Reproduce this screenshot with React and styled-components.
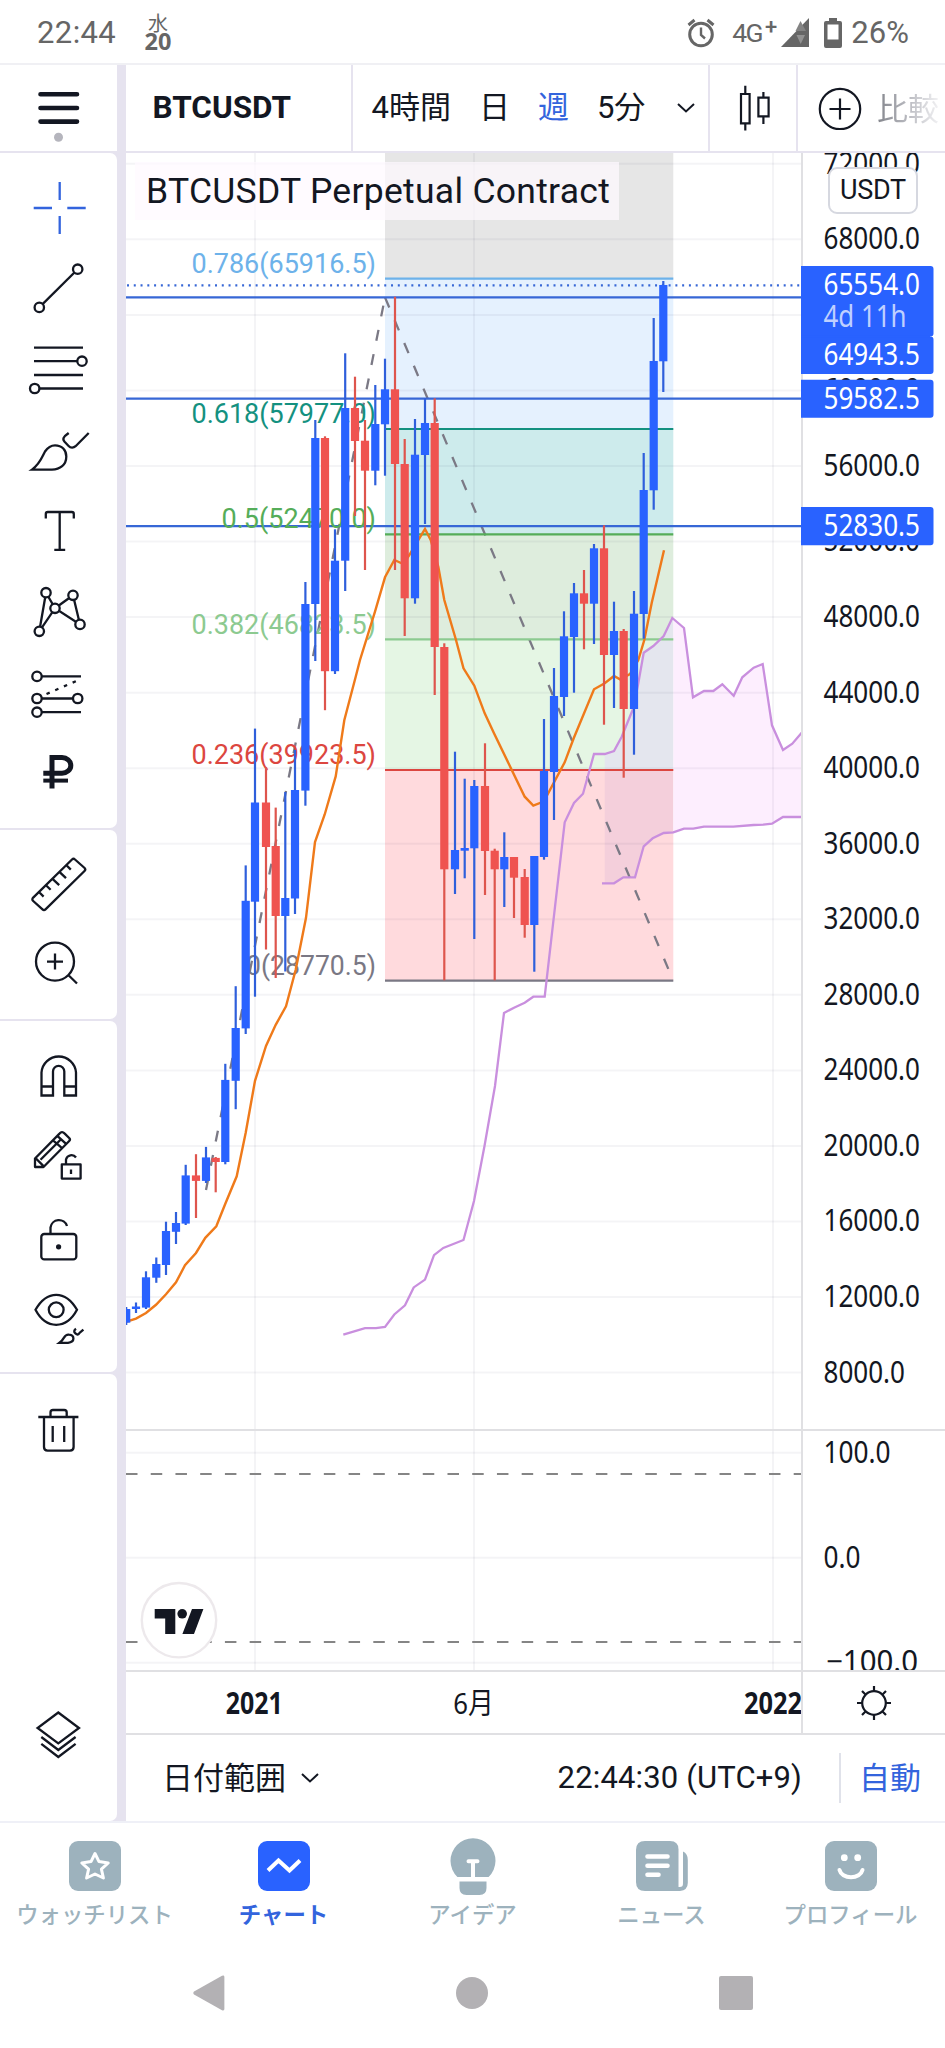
import React from "react";
import styled, { createGlobalStyle, css } from "styled-components";

const INK = "#131722";
const BLUE = "#2962ff";
const LINK = "#3364dd";
const FRAME = "#e6e3ef";
const RULE = "#e0e0e3";
const MUTED = "#9db2bd";
const FONT = `Roboto, "Noto Sans CJK JP", sans-serif`;
const AXIS_FONT = `"Noto Sans", "Noto Sans CJK JP", sans-serif`;

const Global = createGlobalStyle`
  * { box-sizing: border-box; }
  body { margin: 0; background: #fff; color: ${INK}; font-family: ${FONT}; }
  svg { display: block; flex: none; }
`;

/* ---------- shell ---------- */

const Screen = styled.div`
  display: flex;
  flex-direction: column;
  width: 945px;
  height: 2048px;
  overflow: hidden;
  background: #fff;
`;

const StatusBar = styled.header`
  display: flex;
  align-items: center;
  height: 65px;
  padding: 2px 36px 0 37px;
  border-bottom: 2px solid #f0f0f4;
  color: #666;
  font-size: 31px;
  line-height: 36px;
`;

const Clock = styled.span`
  letter-spacing: 0.4px;
  width: 107px;
`;

const DateBadge = styled.span`
  display: flex;
  flex-direction: column;
  align-items: center;
  width: 28px;
  margin: 0 auto 0 0;
  font-family: "Noto Sans", "Noto Sans CJK JP", sans-serif;
  font-size: 20px;
  line-height: 16px;

  b {
    font-size: 23.5px;
    font-weight: 700;
    line-height: 18px;
  }
`;

const Network = styled.span`
  display: flex;
  align-items: center;
  gap: 3px;
  margin: 0 4px 0 17px;
  font-size: 26.5px;
  letter-spacing: -1.6px;
  white-space: nowrap;

  sup {
    margin-top: -12px;
    font-size: 22px;
    line-height: 20px;
    font-weight: 500;
    letter-spacing: 0;
  }
`;

const Signal = styled.svg`
  margin-right: 15px;
`;

const Percent = styled.span`
  margin-left: 9px;
  letter-spacing: 0.1px;
`;

const Main = styled.main`
  display: flex;
  height: 1756px;
`;

const Sidebar = styled.aside`
  display: flex;
  flex-direction: column;
  gap: 2px;
  width: 126px;
  padding-right: 9px;
  background: ${FRAME};
`;

const MenuButton = styled.div`
  height: 86px;
  background: #fff;
`;

const ToolGroup = styled.div`
  display: flex;
  flex-direction: column;
  height: ${(p) => p.$height}px;
  padding-top: ${(p) => p.$top}px;
  padding-bottom: 46px;
  background: #fff;
  border-radius: 0 7px 7px 0;
`;

const Tool = styled.svg`
  width: 117px;
  height: 81px;
  fill: none;
  stroke: ${(p) => (p.$active ? LINK : INK)};
  stroke-width: 2.3;
  ${(p) =>
    p.$last &&
    css`
      margin-top: auto;
    `}
`;

const Content = styled.section`
  display: flex;
  flex-direction: column;
  width: 819px;
`;

/* ---------- toolbar ---------- */

const Toolbar = styled.div`
  display: flex;
  height: 88px;
  border-bottom: 2px solid ${FRAME};
`;

const ToolbarCell = styled.div`
  display: flex;
  align-items: center;
  gap: ${(p) => p.$gap || 0}px;
  width: ${(p) => p.$width}px;
  padding-left: ${(p) => p.$pad || 0}px;
  border-right: ${(p) => (p.$open ? "none" : `2px solid ${FRAME}`)};
  font-size: 31px;
  white-space: nowrap;
  overflow: hidden;
`;

const Symbol = styled.span`
  margin-top: -1px;
  font-size: 31.5px;
  font-weight: 700;
  letter-spacing: 0;
`;

const Interval = styled.span`
  line-height: 40px;
  margin-top: -1px;
  margin-right: ${(p) => (p.$last ? 4 : 0)}px;
  color: ${(p) => (p.$active ? LINK : INK)};
`;

const Compare = styled.span`
  margin: -3px 0 0 15px;
  background: linear-gradient(90deg, #83858c 0%, #b9bac0 50%, #f2f2f4 100%);
  background-clip: text;
  -webkit-background-clip: text;
  color: transparent;
`;

/* ---------- chart ---------- */

const PaneRow = styled.div`
  position: relative;
  display: flex;
  height: ${(p) => p.$height}px;
  border-bottom: 2px solid ${RULE};
`;

const Scale = styled.div`
  width: 144px;
  border-left: 2px solid ${RULE};

  svg {
    margin-left: -2px;
  }
`;

const Legend = styled.div`
  position: absolute;
  left: 9px;
  top: 9px;
  width: 484px;
  height: 58px;
  padding-left: 11px;
  background: rgba(255, 249, 255, 0.72);
  font-size: 35.5px;
  line-height: 59px;
  letter-spacing: 0.28px;
  white-space: nowrap;
`;

const Currency = styled.div`
  position: absolute;
  left: 702px;
  top: 14px;
  width: 90px;
  height: 47px;
  border: 2.5px solid #d6d8e0;
  border-radius: 9px;
  background: #fff;
  font-size: 27px;
  line-height: 42px;
  text-align: center;
  letter-spacing: -0.3px;
`;

const LogoBadge = styled.svg`
  position: absolute;
  left: 14px;
  top: 150px;
`;

const SettingsCell = styled.div`
  display: flex;
  align-items: center;
  justify-content: center;
  width: 144px;
  border-left: 2px solid ${RULE};
`;

const Footer = styled.div`
  display: flex;
  align-items: center;
  height: 86px;
  padding: 0 24px 0 36px;
  font-size: 31px;
  white-space: nowrap;
`;

const RangeLabel = styled.span`
  margin: -6px 15px 0 0;
`;

const Time = styled.span`
  margin: -2px 0 0 auto;
  font-size: 31px;
  letter-spacing: 0.15px;
`;

const AutoScale = styled.span`
  display: flex;
  align-items: center;
  height: 50px;
  margin-left: 37px;
  padding: 0 0 6px 18px;
  border-left: 2px solid #e0e2ea;
  color: ${LINK};
`;

/* ---------- bottom ---------- */

const TabBar = styled.nav`
  display: flex;
  height: 127px;
  padding-top: 12px;
  border-top: 2px solid #eff0f7;
`;

const Tab = styled.div`
  display: flex;
  flex-direction: column;
  align-items: center;
  width: 189px;
  color: ${(p) => (p.$active ? BLUE : MUTED)};

  span {
    margin-top: -4px;
    font-family: "Noto Sans CJK JP", sans-serif;
    font-size: 22.4px;
    line-height: 32px;
    font-weight: ${(p) => (p.$active ? 700 : 500)};
    color: ${(p) => (p.$active ? LINK : MUTED)};
    white-space: nowrap;
  }
`;

const SystemNav = styled.nav`
  display: flex;
  justify-content: space-between;
  align-items: center;
  height: 90px;
  padding: 0 192px 0 193px;
`;

/* ---------- chart data (pixel space of the panes) ---------- */

const priceY = (p) => 768.2 - ((p - 40000) / 4000) * 75.55;
const PRICES = Array.from({ length: 17 }, (_, i) => 8000 + i * 4000);
const MONTH_X = [255, 474, 773];

// x, wick top, body top, body bottom, wick bottom, falling
const CANDLES = [
  [126.2, 1307, 1309, 1322.7, 1325],
  [136, 1302.5, 1306.5, 1309, 1313],
  [146, 1271.3, 1277.3, 1307.6, 1309],
  [156.3, 1257.5, 1264, 1277.7, 1282.8],
  [166, 1221.7, 1231, 1265, 1275],
  [176, 1212, 1223, 1231.8, 1244],
  [185.7, 1164.8, 1175.4, 1223.6, 1225],
  [196, 1154.2, 1175.4, 1180.9, 1218, 1],
  [206, 1146.9, 1157.4, 1180.9, 1183],
  [215.7, 1157, 1157.9, 1162, 1192.3, 1],
  [225.3, 1063.8, 1079.9, 1162, 1164.3],
  [235.7, 986.2, 1028, 1080.8, 1109.2],
  [245.7, 865.4, 900.8, 1028.4, 1034],
  [255, 728.6, 802.5, 901.7, 996.7],
  [266, 767.2, 802.5, 847, 949.5, 1],
  [275.7, 807.6, 846, 916, 978, 1],
  [285.3, 792, 898, 916, 971.5],
  [295, 750, 790, 898.5, 914],
  [305.4, 582, 604, 790.6, 805.7],
  [315.3, 420, 438, 604, 661],
  [325, 436.3, 438, 671.2, 710.2, 1],
  [335, 529.3, 560.7, 671.2, 674],
  [345.2, 353.3, 408, 560.7, 591],
  [355, 376.7, 408, 441, 516, 1],
  [365, 420, 440.7, 470.7, 570, 1],
  [375.3, 385, 424, 470.7, 485.3],
  [385, 358.7, 389.3, 424.3, 475.7],
  [395, 296.7, 389.3, 464, 570, 1],
  [404.7, 439, 464, 598.3, 636, 1],
  [415, 419, 454.7, 598.3, 603.7],
  [425, 398.3, 423, 455, 524],
  [434.7, 398.3, 423, 647, 695, 1],
  [444.3, 643.3, 647, 869.3, 980.3, 1],
  [455, 751.7, 850, 869.3, 894],
  [464.7, 778.7, 848, 850.7, 878.3],
  [474.3, 780, 786, 848.3, 939],
  [485, 743.3, 786, 851, 895, 1],
  [494.7, 848.7, 850.7, 869.3, 980.3, 1],
  [504.3, 832.3, 857, 869.3, 907],
  [514, 857, 857, 877.7, 918, 1],
  [524.7, 869, 877, 925, 937.7, 1],
  [534.3, 856, 856, 925, 971.7],
  [544, 719, 771, 857, 859.7],
  [554, 668, 696, 772, 820],
  [564, 611.3, 636.3, 697, 716],
  [574, 583, 593.3, 637, 692.7],
  [584, 570, 593.3, 603.7, 649.3, 1],
  [594, 544, 548.3, 603.7, 644],
  [604, 525.3, 548.3, 655, 724.7, 1],
  [614, 601.7, 631, 655, 708],
  [623.7, 629, 631, 709, 777.7, 1],
  [634, 591, 613.7, 709, 754.7],
  [643.7, 453, 490, 614, 638.7],
  [653.7, 318, 361, 490.3, 509.7],
  [663.3, 281, 285, 361.3, 392],
];

const AVERAGE =
  "120,1323.5 126,1321.8 136,1318.6 146,1313 156,1304.8 166,1294.3 176,1282.3 185,1265.3 196,1253 205.3,1237.8 216.3,1226.3 225.3,1203.8 236.7,1176.3 245.7,1132.7 255,1080.8 266,1045.9 275.7,1024.8 286,1006.4 295.7,969.7 306,917.8 315,842 324.7,814.5 335.7,776.4 344.3,720.3 355.7,676.7 360,660 375,611.7 385,577.3 394.3,560 403.3,564 409.3,555 419.3,538.3 425,529 430.7,540 438.3,566.7 444.3,600 456,640 463.5,668.3 474.3,685.7 484.7,713.3 494,733.3 524.7,796.7 533.3,805.7 541.7,802.3 546.7,796 564.7,762.3 573.7,738.3 594,689.3 604.7,683.3 614,676 620,679.3 630,674 638.3,660 644.3,640 651.7,603 664,550.3";

const SPAN_A_HEAD =
  "343.3,1334.7 365,1328.2 376,1328.2 385,1326.9 394.3,1314.5 405,1305.3 413.7,1287.4 425,1279.6 434,1255.2 443.3,1247.9 463.5,1240 474,1201 484.5,1146 495,1086 504,1013 514,1007.7 524.7,1002.7 533.3,996.7 544.7,996.7 564.7,822.3 574,803 583,793.7 594,754";
const SPAN_A_TAIL =
  "604.7,754 614,751 621.7,736.7 633.3,708.3 638.3,683.3 643.7,652.7 653.3,646 663.7,636 672.3,618 684,628 693,697.3 704,691 713.3,691 722.3,684.3 733.7,695.7 742.3,677.3 753.7,667.7 762.7,664 772,725.3 783,750 792.3,743.7 802,732.3";
const SPAN_B =
  "602,883.3 614,883.3 623.3,877.3 635,877.3 643.7,846.3 652.7,838.3 663.7,833 673.3,832.3 684,828.7 693.3,828.7 704,826.7 733.3,826.7 753.7,825 763.3,824.7 772,823.7 783,817 802,817";
const CLOUD = `${SPAN_A_TAIL} ${SPAN_B.split(" ").slice(1).reverse().join(" ")} 604.7,883.3`;

const FIB_BANDS = [
  [150, 278.7, "#e6e6e6"],
  [278.7, 429, "#e5f1fe"],
  [429, 534.4, "#cdebec"],
  [534.4, 639.4, "#deeddd"],
  [639.4, 770, "#e5f6e4"],
  [770, 980.7, "#ffdadd"],
];

// slices of the cloud: x, y, width, height, tint
const CLOUD_SLICES = [
  [600, 600, 73.3, 170, "#e4e6ee"],
  [600, 770, 73.3, 130, "#f4cfdb"],
  [673.3, 600, 130, 300, "#fdeefe"],
];

const FIB_LEVELS = [
  ["0.786(65916.5)", 278.7, 272.8, 184.5, "#6db2ea"],
  ["0.618(57977.0)", 429, 422.9, 184.5, "#149180"],
  ["0.5(52470.0)", 534.4, 528.2, 154.5, "#55ad59"],
  ["0.382(46823.5)", 639.4, 633.8, 184.5, "#8cca90"],
  ["0.236(39923.5)", 770, 764.2, 184.5, "#dc4640"],
  ["0(28770.5)", 980.7, 974.9, 130, "#7a7884"],
];

function PriceChart() {
  return (
    <svg width="675" height="1276" viewBox="126 153 675 1276">
      <clipPath id="cloud">
        <polygon points={CLOUD} />
      </clipPath>
      {FIB_BANDS.map(([top, bottom, fill]) => (
        <rect key={top} x="385" y={top} width="288.3" height={bottom - top} fill={fill} />
      ))}
      <g clipPath="url(#cloud)">
        {CLOUD_SLICES.map(([x, y, width, height, fill]) => (
          <rect key={fill} x={x} y={y} width={width} height={height} fill={fill} />
        ))}
      </g>
      <g stroke="rgba(40,40,70,0.05)" strokeWidth="2">
        {PRICES.map((p) => (
          <line key={p} x1="126" x2="801" y1={priceY(p)} y2={priceY(p)} />
        ))}
        {MONTH_X.map((x) => (
          <line key={x} x1={x} x2={x} y1="153" y2="1429" />
        ))}
      </g>
      <g stroke="#7b7985" strokeWidth="2.3" strokeDasharray="11 13.75">
        <line x1="206" y1="1190" x2="385" y2="297.4" />
        <line x1="385" y1="297.4" x2="673.3" y2="980.7" />
      </g>
      <g stroke="#3767d6" strokeWidth="2.2">
        <line x1="127" x2="801" y1="285.3" y2="285.3" strokeDasharray="2 4.77" />
        <line x1="126" x2="801" y1="297.3" y2="297.3" />
        <line x1="126" x2="801" y1="398.7" y2="398.7" />
        <line x1="126" x2="801" y1="526.2" y2="526.2" />
      </g>
      {FIB_LEVELS.map(([text, y, base, width, color]) => (
        <g key={text}>
          <line x1="385" x2="673.3" y1={y} y2={y} stroke={color} strokeWidth="2.2" />
          <text
            x="376"
            y={base}
            textAnchor="end"
            textLength={width}
            lengthAdjust="spacingAndGlyphs"
            fontSize="27.5"
            fontFamily="Roboto, sans-serif"
            fill={color}
          >
            {text}
          </text>
        </g>
      ))}
      <g fill="none" stroke="#c98fde" strokeWidth="2.3">
        <polyline points={`${SPAN_A_HEAD} ${SPAN_A_TAIL}`} />
        <polyline points={SPAN_B} />
      </g>
      <polyline points={AVERAGE} fill="none" stroke="#ef7a1a" strokeWidth="2.4" />
      {CANDLES.map(([x, high, top, bottom, low, falling]) => (
        <g key={x}>
          <rect x={x - 1.1} y={high} width="2.2" height={low - high} fill={falling ? "#de554d" : "#2f5fdb"} />
          <rect x={x - 4.1} y={top} width="8.2" height={bottom - top} fill={falling ? "#ef5350" : BLUE} />
        </g>
      ))}
    </svg>
  );
}

function AxisText({ x = 823.5, y, width, size = 30, anchor, weight, fill = INK, children }) {
  return (
    <text
      x={x}
      y={y}
      textLength={width}
      lengthAdjust="spacingAndGlyphs"
      textAnchor={anchor}
      fontSize={size}
      fontWeight={weight}
      fontFamily={AXIS_FONT}
      fill={fill}
    >
      {children}
    </text>
  );
}

const PRICE_TAGS = [
  [266, 336.5, [[295.3, "65554.0"], [327, "4d 11h"]]],
  [336.5, 374, [[365, "64943.5"]]],
  [379.7, 417.7, [[408.7, "59582.5"]]],
  [507, 545.3, [[536.3, "52830.5"]]],
];

function PriceScale() {
  return (
    <svg width="144" height="1276" viewBox="801 153 144 1276">
      {PRICES.map((p) => (
        <AxisText key={p} y={priceY(p) + 9.9} width={p < 10000 ? 81.5 : 96.5}>
          {p.toFixed(1)}
        </AxisText>
      ))}
      {PRICE_TAGS.map(([top, bottom, rows]) => (
        <g key={top}>
          <path d={`M801 ${top}H930.5a3 3 0 0 1 3 3V${bottom - 3}a3 3 0 0 1-3 3H801Z`} fill={BLUE} />
          {rows.map(([y, text]) => (
            <AxisText
              key={text}
              y={y}
              width={text.includes("d") ? 83 : 96.5}
              fill={text.includes("d") ? "#bfd0ff" : "#fff"}
            >
              {text}
            </AxisText>
          ))}
        </g>
      ))}
      <path d="M801 336.5H930" stroke={BLUE} strokeWidth="1.5" />
    </svg>
  );
}

function OscillatorPane() {
  return (
    <svg width="675" height="239" viewBox="126 1431 675 239">
      <g stroke="rgba(40,40,70,0.05)" strokeWidth="2">
        {[1452.7, 1557.7, 1662.7].map((y) => (
          <line key={y} x1="126" x2="801" y1={y} y2={y} />
        ))}
        {MONTH_X.map((x) => (
          <line key={x} x1={x} x2={x} y1="1431" y2="1670" />
        ))}
      </g>
      <g stroke="#858585" strokeWidth="2" strokeDasharray="11.5 13.23">
        <line x1="126" x2="801" y1="1474" y2="1474" />
        <line x1="126" x2="801" y1="1642" y2="1642" />
      </g>
    </svg>
  );
}

/* ---------- sidebar icons ---------- */

const Knob = ({ x, y }) => <circle cx={x} cy={y} r="4.7" fill="#fff" />;

const DRAW_TOOLS = [
  <path key="cross" d="M33.7 208H52M67.3 208H85.7M59.7 182V200M59.7 216V234" />,
  <g key="line">
    <path d="M39.3 307.4 77.7 269.2" />
    <Knob x={39.3} y={307.4} />
    <Knob x={77.7} y={269.2} />
  </g>,
  <g key="fib">
    <path d="M34 347.7H83M34 361.2H82M34 375H83M35 388.5H83" />
    <Knob x={82} y={361.2} />
    <Knob x={34.7} y={388.5} />
  </g>,
  <path
    key="brush"
    d="M32 469.6C40 464 42 457 45 451.5C48 447 51 445.3 55 445.3C62 445.3 66.3 450 66.3 456.5C66.3 465 60 469.6 52 469.6ZM68.7 433L64.8 436.2C63 438 63 440 64.6 441.8L68.6 446C70.6 448.2 73.5 448.2 75.6 446.2L88.7 433"
  />,
  <path key="text" d="M45.8 518.6V514A2 2 0 0 1 47.8 512H71.8A2 2 0 0 1 73.8 514V518.6M59.7 512V549.8M54.3 549.8H65.2" />,
  <g key="pattern">
    <path d="M46 592.7 39.3 631.3 55 608.3ZM55 608.3 73 595.3 80 624.4Z" />
    <Knob x={46} y={592.7} />
    <Knob x={73} y={595.3} />
    <Knob x={55} y={608.3} />
    <Knob x={39.3} y={631.3} />
    <Knob x={80} y={624.4} />
  </g>,
  <g key="channel">
    <path d="M37 676.4H81M37 698.5H77.7M37 712.2H81" />
    <path d="M46.5 694 78 680.3" strokeDasharray="3.5 6" />
    <Knob x={37} y={676.4} />
    <Knob x={37} y={698.5} />
    <Knob x={77.7} y={698.5} />
    <Knob x={37} y={712.2} />
  </g>,
  <g key="ruble" strokeWidth="5">
    <path d="M52 788.5V757.6H62A8.8 7.8 0 0 1 62 773.2H43.3" />
    <path d="M43.3 780.6H68" strokeWidth="4" />
  </g>,
];

const MEASURE_TOOLS = [
  <path
    key="ruler"
    strokeLinejoin="round"
    d="M33.2 897.6 72 859.5Q73.5 858 75 859.5L84.6 868Q86 869.5 84.5 871L45.5 909.4Q44 911 42.5 909.4L33.2 901Q31.5 899.5 33.2 897.6ZM39 892 43.6 896.6M46 885.2 50.6 889.8M52.5 878.8 59.2 885.2M59.4 871.8 66 878.2M66.2 865 70.8 869.6"
  />,
  <path key="zoom" d="M74 961.6A19 19 0 1 1 36 961.6A19 19 0 1 1 74 961.6ZM68.3 975 77 983.5M47 961.6H63M55 953.6V969.6" />,
];

const MODE_TOOLS = [
  <path key="magnet" d="M41.5 1095.5V1072.5A17.3 17.3 0 0 1 76 1072.5V1095.5H64.3V1071.5A5.6 5.6 0 0 0 53 1071.5V1095.5ZM41.5 1086.5H53M64.3 1086.5H76" />,
  <g key="pencil" strokeLinejoin="round">
    <path d="M35 1167V1158.5L59.5 1133.6Q62 1130.8 64.5 1133.4L69.4 1138.2Q70.6 1139.6 69.2 1141L43.5 1167ZM35.5 1158 44 1166.6M40.5 1159.8 61.5 1138.8M53 1140.4 62.4 1148.4M57 1135.6 66.4 1144.2" />
    <path d="M61.8 1164.4H80.6V1178.6H61.8ZM66 1164V1159.5A5.6 5.6 0 0 1 76 1157.5" />
    <path d="M71 1169.5V1174" />
  </g>,
  <g key="lock">
    <rect x="41.3" y="1234" width="35" height="25.4" rx="3" />
    <path d="M50.5 1234V1227.5A8.5 8.5 0 0 1 67 1226" />
    <circle cx="58.6" cy="1246.8" r="2.6" fill={INK} stroke="none" />
  </g>,
  <g key="eye">
    <path d="M35.5 1309.8Q44 1294.8 56.2 1294.8T77 1309.8Q69 1324.8 56.2 1324.8T35.5 1309.8Z" />
    <circle cx="56.2" cy="1309.8" r="7.4" />
    <path d="M59.5 1342.8Q62 1341 64 1337.6T69 1334.6Q73.4 1335 73.4 1338.6T68 1342.8ZM76 1328.8Q72.8 1331 75.4 1333.4T79.5 1333L83.4 1329.6" />
  </g>,
];

const TRASH = (
  <path d="M38.3 1417H78.4M50.5 1416V1412.4Q50.5 1410 53 1410H64.2Q66.7 1410 66.7 1412.4V1416M44 1417V1447Q44 1450.6 47.6 1450.6H70Q73.6 1450.6 73.6 1447V1417M52.7 1426V1442M64.2 1426V1442" />
);
const LAYERS = (
  <path d="M58.3 1712.5 79 1728 58.3 1743.4 37.6 1728ZM41.3 1737 58.3 1750 75.6 1737M41.3 1743.8 58.3 1757 75.6 1743.8" />
);

function ToolList({ icons, from, activeIndex }) {
  return icons.map((icon, i) => (
    <Tool key={i} viewBox={`0 ${from + i * 81} 117 81`} $active={i === activeIndex}>
      {icon}
    </Tool>
  ));
}

const Chevron = () => (
  <svg width="18" height="10" viewBox="0 0 18 10" fill="none" stroke={INK} strokeWidth="2">
    <path d="M1 1 9 8.5 17 1" />
  </svg>
);

/* ---------- tab icons ---------- */

const TABS = [
  {
    label: "ウォッチリスト",
    icon: (
      <>
        <rect x="2" y="6" width="52" height="50" rx="9" />
        <path
          d="M28 18.5 32 26.6 41.2 28 34.4 34.2 36.4 43 28 39 19.6 43 21.6 34.2 14.8 28 24 26.6Z"
          fill="none"
          stroke="#fff"
          strokeWidth="3"
          strokeLinejoin="round"
        />
      </>
    ),
  },
  {
    label: "チャート",
    active: true,
    icon: (
      <>
        <rect x="2" y="6" width="52" height="50" rx="9" />
        <path d="M12 35.5 22.5 25.5 33.5 35.5 44 25.5" fill="none" stroke="#fff" strokeWidth="4" />
      </>
    ),
  },
  {
    label: "アイデア",
    icon: (
      <>
        <path d="M12.4 42A22.5 22.5 0 1 1 43.6 42ZM14.5 46.5H41.5V53Q41.5 60 34.5 60H21.5Q14.5 60 14.5 53Z" />
        <path d="M23.5 26.2H32.5M28 26.2V42" fill="none" stroke="#fff" strokeWidth="4" strokeLinecap="round" />
      </>
    ),
  },
  {
    label: "ニュース",
    icon: (
      <>
        <path d="M11 6H36Q44.5 6 44.5 14.5V56H11Q2 56 2 47V15Q2 6 11 6Z" />
        <path d="M49 16.5Q53.8 18.5 53.8 25V48Q53.8 55 46 56H42V52H46Q49 51 49 47Z" />
        <path d="M47 14V50" stroke="#fff" strokeWidth="3.5" strokeLinecap="round" />
        <path d="M13.5 21.5H33.5M13.5 30.7H33.5M13.5 39.7H24.5" stroke="#fff" strokeWidth="4.6" strokeLinecap="round" />
      </>
    ),
  },
  {
    label: "プロフィール",
    icon: (
      <>
        <rect x="2" y="6" width="52" height="50" rx="9" />
        <circle cx="21.3" cy="22.7" r="3.4" fill="#fff" />
        <circle cx="34.7" cy="22.7" r="3.4" fill="#fff" />
        <path d="M16.5 35A11.7 9 0 0 0 39.5 35" fill="none" stroke="#fff" strokeWidth="4" strokeLinecap="round" />
      </>
    ),
  },
];

export default function App() {
  return (
    <Screen>
      <Global />
      <StatusBar>
        <Clock>22:44</Clock>
        <DateBadge>
          水<b>20</b>
        </DateBadge>
        <svg width="28" height="30" viewBox="0 0 28 30" fill="none" stroke="#666" strokeWidth="3">
          <circle cx="14" cy="16.5" r="11.3" />
          <path d="M14 9.5V17L18 20.5" strokeWidth="2.4" />
          <path d="M1.5 7 7.5 2M26.5 7 20.5 2" />
        </svg>
        <Network>
          4G<sup>+</sup>
        </Network>
        <Signal width="28" height="29" viewBox="0 0 28 29">
          <path d="M28 0V29H0Z" fill="#666" />
          <path d="M19.5 3 25 13H14.5Z" fill="#838383" />
          <path d="M15.5 17H24L19.7 26Z" fill="#929292" />
        </Signal>
        <svg width="18" height="30" viewBox="0 0 18 30">
          <path d="M5 0H13V3H16Q18 3 18 5V28Q18 30 16 30H2Q0 30 0 28V5Q0 3 2 3H5ZM3.5 6.5V21.5H14.5V6.5Z" fill="#666" fillRule="evenodd" />
        </svg>
        <Percent>26%</Percent>
      </StatusBar>

      <Main>
        <Sidebar>
          <MenuButton>
            <svg width="117" height="86" viewBox="0 65 117 86">
              <path d="M40.5 94.3H77M40.5 108H77M40.5 121.6H77" stroke={INK} strokeWidth="4.6" strokeLinecap="round" />
              <circle cx="58.5" cy="137.3" r="4.5" fill="#b5b5bd" />
            </svg>
          </MenuButton>
          <ToolGroup $height={675} $top={14}>
            <ToolList icons={DRAW_TOOLS} from={167} activeIndex={0} />
          </ToolGroup>
          <ToolGroup $height={189} $top={11}>
            <ToolList icons={MEASURE_TOOLS} from={841} />
          </ToolGroup>
          <ToolGroup $height={351} $top={13}>
            <ToolList icons={MODE_TOOLS} from={1034} />
          </ToolGroup>
          <ToolGroup $height={447} $top={17}>
            <Tool viewBox="0 1391 117 81">{TRASH}</Tool>
            <Tool viewBox="0 1694 117 81" $last>
              {LAYERS}
            </Tool>
          </ToolGroup>
        </Sidebar>

        <Content>
          <Toolbar>
            <ToolbarCell $width={227} $pad={26.5}>
              <Symbol>BTCUSDT</Symbol>
            </ToolbarCell>
            <ToolbarCell $width={357} $pad={18.5} $gap={28}>
              <Interval>4時間</Interval>
              <Interval>日</Interval>
              <Interval $active>週</Interval>
              <Interval $last>5分</Interval>
              <Chevron />
            </ToolbarCell>
            <ToolbarCell $width={88} $pad={28}>
              <svg width="32" height="46" viewBox="738 85 32 46" fill="none" stroke={INK} strokeWidth="2.2">
                <path d="M741 94H749.6V123.3H741ZM745.3 85.7V94M745.3 123.3V130.5M758.4 97.6H768.6V116.3H758.4ZM763.4 92V97.6M763.4 116.3V124" />
              </svg>
            </ToolbarCell>
            <ToolbarCell $width={147} $pad={20} $open>
              <svg width="44" height="44" viewBox="0 0 44 44" fill="none" stroke={INK} strokeWidth="2.2">
                <circle cx="22" cy="23" r="20.2" />
                <path d="M11.5 23H32.5M22 12.5V33.5" />
              </svg>
              <Compare>比較</Compare>
            </ToolbarCell>
          </Toolbar>

          <PaneRow $height={1278}>
            <PriceChart />
            <Scale>
              <PriceScale />
            </Scale>
            <Legend>BTCUSDT Perpetual Contract</Legend>
            <Currency>USDT</Currency>
          </PaneRow>

          <PaneRow $height={241}>
            <OscillatorPane />
            <Scale>
              <svg width="144" height="239" viewBox="801 1431 144 239">
                <AxisText y={1462.6} width={67}>100.0</AxisText>
                <AxisText y={1567.6} width={37}>0.0</AxisText>
                <AxisText x={826} y={1672.3} width={92}>−100.0</AxisText>
              </svg>
            </Scale>
            <LogoBadge width="78" height="78" viewBox="140 1581 78 78">
              <circle cx="179" cy="1620.2" r="37.2" fill="#fff" stroke="#ede9ec" strokeWidth="2.4" />
              <path d="M154.7 1609H175.3V1634H165.2V1618.5H154.7ZM192 1609H203.4L194 1634H182.4Z" fill={INK} />
              <circle cx="182.2" cy="1613.8" r="4.8" fill={INK} />
            </LogoBadge>
          </PaneRow>

          <PaneRow $height={63}>
            <svg width="675" height="61" viewBox="126 1672 675 61">
              <AxisText x={254.3} y={1713.8} width={57} anchor="middle" weight="700">2021</AxisText>
              <AxisText x={473.5} y={1713.8} width={40.5} size={29} anchor="middle">6月</AxisText>
              <AxisText x={773} y={1713.8} width={58} anchor="middle" weight="700">2022</AxisText>
            </svg>
            <SettingsCell>
              <svg width="36" height="36" viewBox="-18 -18 36 36" fill="none" stroke={INK} strokeWidth="2.2">
                <circle r="11.8" />
                <path d="M0-17V-12M0 17V12M-17 0H-12M17 0H12M-12-12-8.5-8.5M12-12 8.5-8.5M-12 12-8.5 8.5M12 12 8.5 8.5" />
              </svg>
            </SettingsCell>
          </PaneRow>

          <Footer>
            <RangeLabel>日付範囲</RangeLabel>
            <Chevron />
            <Time>22:44:30 (UTC+9)</Time>
            <AutoScale>自動</AutoScale>
          </Footer>
        </Content>
      </Main>

      <TabBar>
        {TABS.map((tab) => (
          <Tab key={tab.label} $active={tab.active}>
            <svg width="56" height="66" viewBox="0 0 56 66" fill="currentColor">
              {tab.icon}
            </svg>
            <span>{tab.label}</span>
          </Tab>
        ))}
      </TabBar>

      <SystemNav>
        <svg width="32" height="36" viewBox="0 0 32 36" fill="#b3b1b4">
          <path d="M1 16.6 29 .8Q31.4 0 31.4 2V34Q31.4 36 29 35.2L1 19.4Q-.4 18 1 16.6Z" />
        </svg>
        <svg width="32" height="32" viewBox="0 0 32 32" fill="#b3b1b4">
          <circle cx="16" cy="16" r="16" />
        </svg>
        <svg width="34" height="34" viewBox="0 0 34 34" fill="#b3b1b4">
          <rect width="34" height="34" rx="2" />
        </svg>
      </SystemNav>
    </Screen>
  );
}
